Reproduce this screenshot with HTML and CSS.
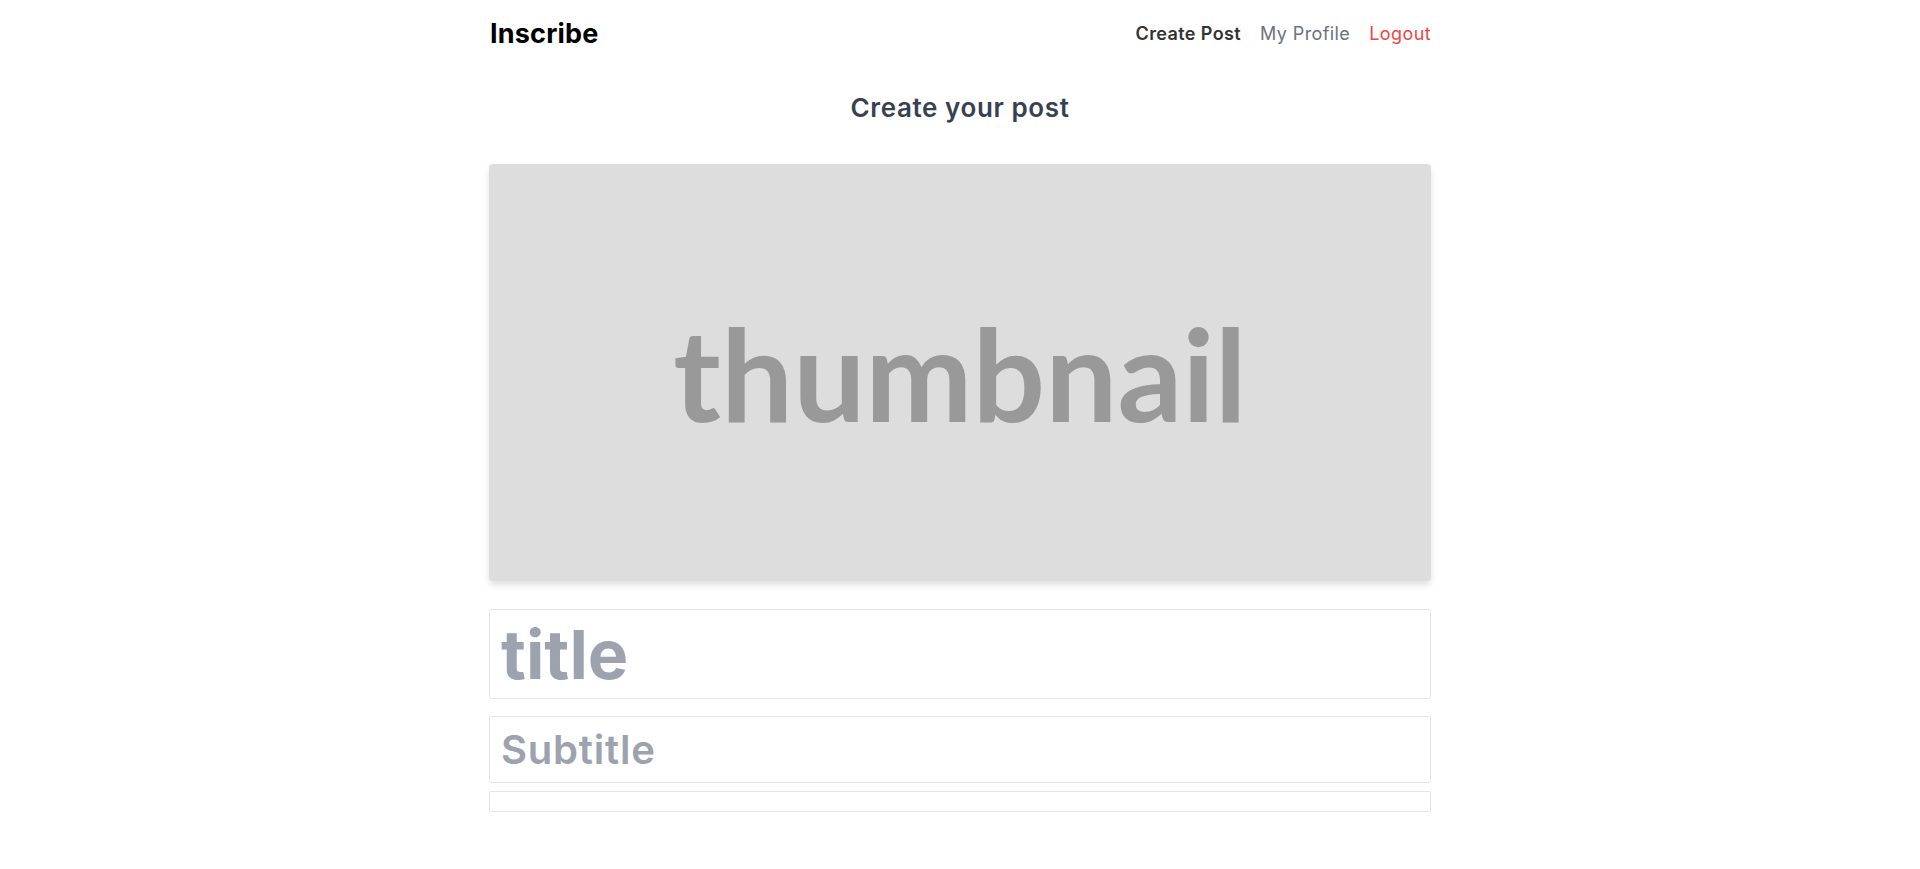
FILE: index.html
```html
<!DOCTYPE html>
<html lang="en">
<head>
<meta charset="utf-8">
<title>Inscribe</title>
<link rel="stylesheet" href="styles.css">
</head>
<body>
<div class="page">
  <header class="navbar">
    <a class="brand" href="#">Inscribe</a>
    <nav class="nav-links">
      <a class="nav-link active" href="#">Create Post</a>
      <a class="nav-link" href="#">My Profile</a>
      <a class="nav-link logout" href="#">Logout</a>
    </nav>
  </header>
  <main class="editor">
    <h1 class="page-title">Create your post</h1>
    <div class="thumbnail"><span class="thumb-text">thumbnail</span></div>
    <div class="field title-field"><span class="placeholder title-ph">title</span></div>
    <div class="field subtitle-field"><span class="placeholder subtitle-ph">Subtitle</span></div>
    <div class="field body-field"></div>
  </main>
</div>
</body>
</html>
```
FILE: styles.css
```css
* { box-sizing: border-box; }
html, body { margin: 0; padding: 0; background: #fff; }
body { font-family: Inter, "Liberation Sans", sans-serif; }
a { text-decoration: none; }

.page {
  width: 942px;
  margin: 0 auto;
}

.navbar {
  display: flex;
  justify-content: space-between;
  align-items: center;
  height: 66px;
}
.brand {
  font-size: 27px;
  font-weight: 700;
  color: #000;
  letter-spacing: 0.2px;
  margin-left: 1px;
}
.nav-links {
  display: flex;
  gap: 19px;
}
.nav-link {
  font-size: 18px;
  color: #6b7280;
  letter-spacing: 0.4px;
}
.nav-link.active { color: #333; font-weight: 600; }
.nav-link.logout { color: #ef4444; }

.editor {
  display: flex;
  flex-direction: column;
}
.page-title {
  margin: 26px 0 0;
  text-align: center;
  font-size: 26px;
  font-weight: 600;
  color: #374151;
  line-height: 32px;
  letter-spacing: 0.6px;
}
.thumbnail {
  margin-top: 40px;
  height: 417px;
  background: #dddddd;
  border-radius: 4px;
  box-shadow: 0 4px 6px rgba(0,0,0,0.12);
  display: flex;
  align-items: center;
  justify-content: center;
}
.thumb-text {
  font-family: Lato, sans-serif;
  font-weight: 700;
  font-size: 128px;
  color: #999999;
  line-height: 1;
}
.field {
  border: 1px solid #e5e5e5;
  border-radius: 2px;
  display: flex;
  align-items: center;
  padding-left: 11px;
}
.title-field { margin-top: 28px; height: 90px; }
.subtitle-field { margin-top: 17px; height: 67px; }
.body-field { margin-top: 8px; height: 21px; }
.placeholder { color: #9ca3af; }
.title-ph { font-size: 68px; font-weight: 700; }
.subtitle-ph { font-size: 40px; font-weight: 600; letter-spacing: 0.8px; }
```
